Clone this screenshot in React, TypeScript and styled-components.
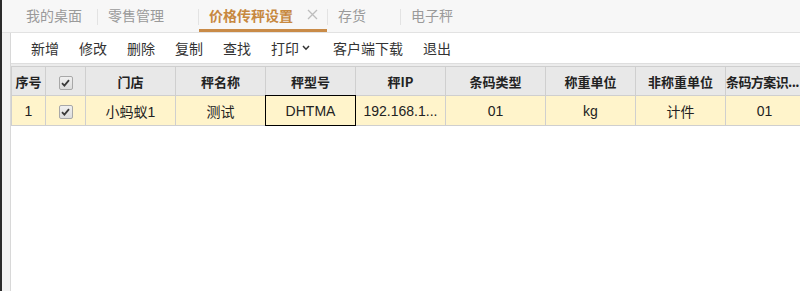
import * as React from 'react'
import styled, { createGlobalStyle } from 'styled-components'

const GlobalStyle = createGlobalStyle`
  html, body {
    margin: 0;
    padding: 0;
    background: #f4f4f4;
  }
  body {
    font-family: "Noto Sans CJK SC", "Liberation Sans", sans-serif;
    overflow: hidden;
  }
`

type Tab = { label: string, width: number, active?: boolean, closable?: boolean }

const tabs: Tab[] = [
    { label: '我的桌面', width: 81 },
    { label: '零售管理', width: 100 },
    { label: '价格传秤设置', width: 128, active: true, closable: true },
    { label: '存货', width: 72 },
    { label: '电子秤', width: 90 },
]

const actions = ['新增', '修改', '删除', '复制', '查找', '打印', '客户端下载', '退出']

type Column = { title: string, width: number, tight?: boolean }

const columns: Column[] = [
    { title: '序号', width: 34 },
    { title: '', width: 40 },
    { title: '门店', width: 90 },
    { title: '秤名称', width: 90 },
    { title: '秤型号', width: 90 },
    { title: '秤IP', width: 90 },
    { title: '条码类型', width: 100 },
    { title: '称重单位', width: 90 },
    { title: '非称重单位', width: 90 },
    { title: '条码方案识...', width: 78, tight: true },
]

const row = ['1', 'check', '小蚂蚁1', '测试', 'DHTMA', '192.168.1...', '01', 'kg', '计件', '01']

const CheckMark = () => (
    <CheckBox>
        <svg width="9" height="8" viewBox="0 0 9 8">
            <path d="M1 4.2 L3.4 6.6 L8 1.2" fill="none" stroke="#3a3a3a" strokeWidth="1.8"/>
        </svg>
    </CheckBox>
)

export default function App() {
    return (
        <Page>
            <GlobalStyle/>
            <DarkEdge/>
            <Main>
                <TabBar>
                    {tabs.map((t, i) => (
                        <React.Fragment key={t.label}>
                            {i > 0 && <TabSep/>}
                            <TabItem $width={t.width} $active={t.active}>
                                {t.label}
                                {t.closable && (
                                    <CloseIcon width="11" height="11" viewBox="0 0 11 11">
                                        <path d="M1 1 L10 10 M10 1 L1 10" stroke="#bdbdbd" strokeWidth="1.3"/>
                                    </CloseIcon>
                                )}
                            </TabItem>
                        </React.Fragment>
                    ))}
                </TabBar>
                <Body>
                    <Gutter/>
                    <Panel>
                        <Toolbar>
                            {actions.map(a => (
                                <ActionButton key={a} $menu={a === '打印'}>
                                    {a}
                                    {a === '打印' && (
                                        <svg width="8" height="6" viewBox="0 0 8 6">
                                            <path d="M1 1 L4 4.2 L7 1" fill="none" stroke="#333" strokeWidth="1.5"/>
                                        </svg>
                                    )}
                                </ActionButton>
                            ))}
                        </Toolbar>
                        <Spacer/>
                        <GridArea>
                            <Grid>
                                <colgroup>
                                    {columns.map((c, i) => <col key={i} style={{ width: c.width }}/>)}
                                </colgroup>
                                <thead>
                                    <tr>
                                        {columns.map((c, i) => (
                                            <HeadCell key={i} $tight={c.tight}>
                                                {i === 1 ? <CheckMark/> : c.title}
                                            </HeadCell>
                                        ))}
                                    </tr>
                                </thead>
                                <tbody>
                                    <tr>
                                        {row.map((v, i) => (
                                            <DataCell key={i} $selected={i === 4}>
                                                {v === 'check' ? <CheckMark/> : v}
                                            </DataCell>
                                        ))}
                                    </tr>
                                </tbody>
                            </Grid>
                            <Watermark>
                                <span>聂鑫0102</span>
                                <span>08181344</span>
                            </Watermark>
                        </GridArea>
                    </Panel>
                </Body>
            </Main>
        </Page>
    )
}

const Page = styled.div`
  display: flex;
  width: 800px;
  height: 291px;
  overflow: hidden;
`

const DarkEdge = styled.div`
  width: 2px;
  flex: none;
  background: #2b2b2b;
`

const Main = styled.div`
  flex: 1;
  display: flex;
  flex-direction: column;
  min-width: 0;
`

const TabBar = styled.div`
  height: 33px;
  box-sizing: border-box;
  flex: none;
  display: flex;
  align-items: flex-start;
  padding-left: 14px;
  background: #f7f7f7;
  border-bottom: 1px solid #e2e2e2;
`

const TabSep = styled.div`
  width: 1px;
  height: 16px;
  margin-top: 9px;
  background: #e3e3e3;
`

const TabItem = styled.div<{ $width: number, $active?: boolean }>`
  width: ${p => p.$width}px;
  height: 32px;
  box-sizing: border-box;
  padding: 0 0 0 10px;
  display: flex;
  align-items: center;
  gap: 14px;
  font-size: 14px;
  line-height: 20px;
  padding-bottom: ${p => p.$active ? 0 : 2}px;
  color: ${p => p.$active ? '#c7883f' : '#9a9a9a'};
  font-weight: ${p => p.$active ? 700 : 400};
  border-bottom: ${p => p.$active ? '3px solid #c98b48' : 'none'};
`

const CloseIcon = styled.svg`
  flex: none;
`

const Body = styled.div`
  flex: 1;
  display: flex;
  min-height: 0;
`

const Gutter = styled.div`
  width: 8px;
  flex: none;
  background: #f3f3f3;
`

const Panel = styled.div`
  flex: 1;
  display: flex;
  flex-direction: column;
  background: #fff;
  border-left: 1px solid #d8d8d8;
  min-width: 0;
`

const Toolbar = styled.div`
  height: 30px;
  flex: none;
  display: flex;
  align-items: center;
  gap: 20px;
  padding-left: 20px;
  border-bottom: 1px solid #dedede;
  background: #fff;
`

const ActionButton = styled.div<{ $menu?: boolean }>`
  display: flex;
  align-items: center;
  gap: 3px;
  font-size: 14px;
  color: #333;
  margin-right: ${p => p.$menu ? 3 : 0}px;
  cursor: pointer;
`

const Spacer = styled.div`
  height: 2px;
  flex: none;
  background: #ececec;
`

const GridArea = styled.div`
  position: relative;
  flex: 1;
  background: #fff;
  overflow: hidden;
`

const Grid = styled.table`
  table-layout: fixed;
  width: 792px;
  border-collapse: collapse;
  border-left: 1px solid #cfcfcf;
`

const HeadCell = styled.th<{ $tight?: boolean }>`
  height: 29px;
  padding: ${p => p.$tight ? '0 4px 0 0' : '0'};
  box-sizing: border-box;
  background: #e8e8e8;
  border: 1px solid #cfcfcf;
  font-family: "Noto Sans CJK SC", "Liberation Sans", sans-serif;
  font-weight: 700;
  font-size: 13px;
  letter-spacing: ${p => p.$tight ? '-0.6px' : '0'};
  color: #222;
  text-align: center;
  white-space: nowrap;
  overflow: hidden;
`

const DataCell = styled.td<{ $selected?: boolean }>`
  position: relative;
  height: 30px;
  padding: 0 4px;
  box-sizing: border-box;
  background: #fff4cb;
  border: 1px solid #cfcfcf;
  font-family: "Liberation Sans", "Noto Sans CJK SC", sans-serif;
  font-size: 14px;
  color: #222;
  text-align: center;
  white-space: nowrap;
  overflow: ${p => p.$selected ? 'visible' : 'hidden'};
  &::after {
    content: '';
    display: ${p => p.$selected ? 'block' : 'none'};
    position: absolute;
    inset: -1px;
    border: 1px solid #000;
    pointer-events: none;
  }
`

const CheckBox = styled.span`
  display: inline-flex;
  align-items: center;
  justify-content: center;
  width: 12px;
  height: 12px;
  border: 1px solid #a8a8a8;
  border-radius: 2px;
  background: linear-gradient(#f0f0f0, #dcdcdc);
  vertical-align: middle;
`

const Watermark = styled.div`
  position: absolute;
  left: 360px;
  top: 102px;
  display: flex;
  flex-direction: column;
  font-family: "Liberation Sans", "Noto Sans CJK SC", sans-serif;
  font-size: 22px;
  line-height: 22px;
  color: rgba(0, 0, 0, 0.018);
  transform: rotate(-12deg);
  pointer-events: none;
`
